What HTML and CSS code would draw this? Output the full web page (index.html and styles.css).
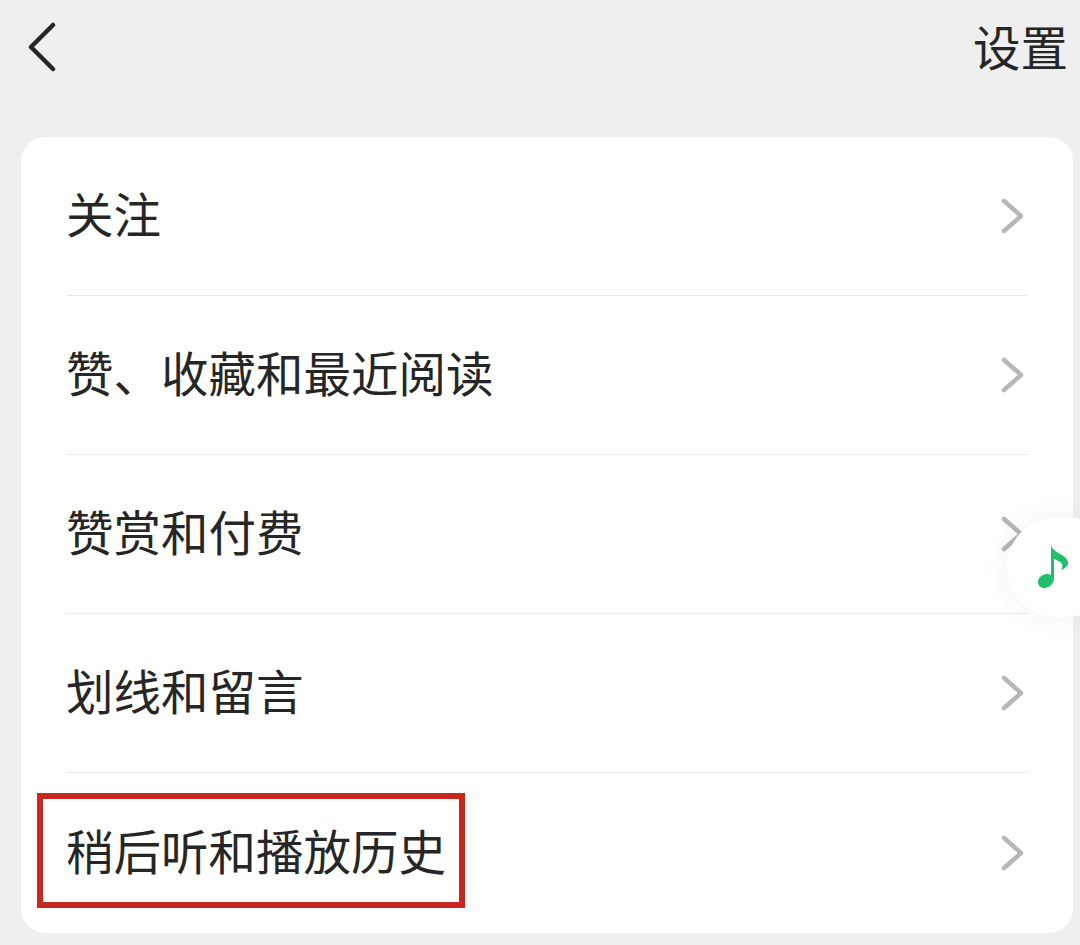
FILE: index.html

```html
<!DOCTYPE html>
<html lang="zh-CN">
<head>
  <meta charset="UTF-8" />
  <title>设置</title>
  <link rel="stylesheet" href="styles.css">
</head>
<body>
  <div class="screen">
    <div class="topbar">
      <svg class="back" width="30" height="50" viewBox="0 0 30 50">
        <path d="M26 3 L4 25 L26 47" />
      </svg>
      <span class="topbar-title">设置</span>
    </div>

    <div class="card">
      <div class="row">
        <span class="row-label">关注</span>
        <svg class="chevron" width="24" height="36" viewBox="0 0 24 36"><path d="M3 3 L20 18 L3 33" /></svg>
      </div>
      <div class="row">
        <span class="row-label">赞、收藏和最近阅读</span>
        <svg class="chevron" width="24" height="36" viewBox="0 0 24 36"><path d="M3 3 L20 18 L3 33" /></svg>
      </div>
      <div class="row">
        <span class="row-label">赞赏和付费</span>
        <svg class="chevron" width="24" height="36" viewBox="0 0 24 36"><path d="M3 3 L20 18 L3 33" /></svg>
      </div>
      <div class="row">
        <span class="row-label">划线和留言</span>
        <svg class="chevron" width="24" height="36" viewBox="0 0 24 36"><path d="M3 3 L20 18 L3 33" /></svg>
      </div>
      <div class="row row-last">
        <span class="row-label">稍后听和播放历史</span>
        <svg class="chevron" width="24" height="36" viewBox="0 0 24 36"><path d="M3 3 L20 18 L3 33" /></svg>
        <div class="highlight"></div>
      </div>
    </div>

    <div class="music-float">
      <svg width="36" height="46" viewBox="0 0 36 46">
        <path class="note" d="M14 1 C15 6 20 8 25 11 C31 15 33 19 29 23 C27 25 25 25.500 24 25.500 C26 23 26 20 23 18 C21 16.500 18.500 15.500 17 15 L17 34 C17 40 12 44 7 44 C3 44 1 41 1 38 C1 33 6 30 10 30 C11.500 30 13 30.500 14 31 Z" />
      </svg>
    </div>
  </div>
</body>
</html>
```

FILE: styles.css

```css
body {
  margin: 0;
  background-color: #efefef;
  font-family: "Noto Sans CJK SC", "Liberation Sans", sans-serif;
  color: #262626;
}
.screen {
  position: relative;
  width: 1080px;
  height: 945px;
  overflow: hidden;
}
.topbar {
  display: flex;
  align-items: center;
  justify-content: space-between;
  height: 94px;
  padding: 0 12px 0 27px;
}
.back path {
  fill: none;
  stroke: #262626;
  stroke-width: 4.5;
  stroke-linecap: round;
  stroke-linejoin: round;
}
.topbar-title {
  font-size: 47.5px;
  padding-bottom: 4px;
}
.card {
  margin: 43px 7px 0 21px;
  padding: 0 45px 0 46px;
  background-color: #ffffff;
  border-radius: 24px;
}
.row {
  position: relative;
  display: flex;
  align-items: center;
  justify-content: space-between;
  height: 158px;
  border-bottom: 1px solid #e9e9e9;
}
.row-last {
  height: 160px;
  border-bottom: none;
}
.row-label {
  margin-left: -1px;
  font-size: 47.5px;
  line-height: 60px;
  padding-bottom: 7px;
}
.chevron {
  margin-right: 3px;
}
.chevron path {
  fill: none;
  stroke: #b7b7b7;
  stroke-width: 4.5;
  stroke-linecap: round;
  stroke-linejoin: round;
}
.highlight {
  position: absolute;
  left: -30px;
  top: 20px;
  width: 416px;
  height: 103px;
  border: 6px solid #c4281f;
}
.music-float {
  position: absolute;
  left: 1007px;
  top: 517px;
  width: 110px;
  height: 100px;
  display: flex;
  align-items: center;
  padding-left: 30px;
  box-sizing: border-box;
  background-color: #ffffff;
  border-radius: 50px;
  box-shadow: 0 0 30px rgba(0, 0, 0, 0.06);
}
.note {
  fill: #1fbf6c;
}
```
